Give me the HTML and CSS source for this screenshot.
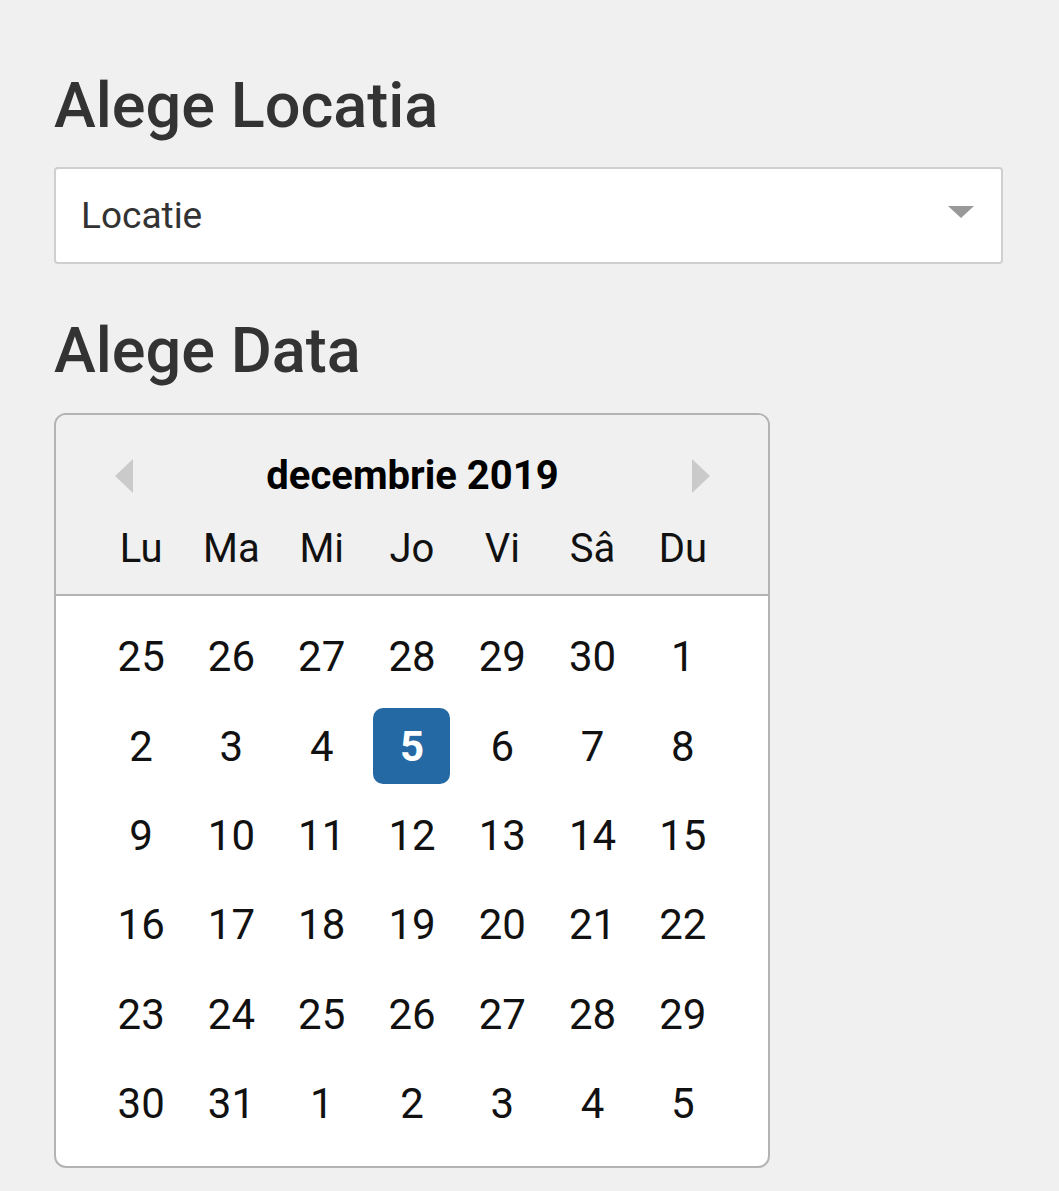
FILE: index.html
```html
<!DOCTYPE html>
<html lang="ro">
<head>
<meta charset="utf-8">
<title>Alege Locatia</title>
<link rel="stylesheet" href="styles.css">
</head>
<body>
<main class="page">
  <h1 class="title title-first">Alege Locatia</h1>
  <div class="select">
    <span class="select-label">Locatie</span>
    <span class="select-caret"></span>
  </div>
  <h1 class="title title-second">Alege Data</h1>
  <section class="calendar">
    <header class="cal-head">
      <div class="cal-nav">
        <span class="arrow arrow-prev"></span>
        <span class="cal-month">decembrie 2019</span>
        <span class="arrow arrow-next"></span>
      </div>
      <div class="cal-grid cal-weekdays">
        <span>Lu</span><span>Ma</span><span>Mi</span><span>Jo</span><span>Vi</span><span>Sâ</span><span>Du</span>
      </div>
    </header>
    <div class="cal-body cal-grid">
      <span class="day">25</span><span class="day">26</span><span class="day">27</span><span class="day">28</span><span class="day">29</span><span class="day">30</span><span class="day">1</span>
      <span class="day">2</span><span class="day">3</span><span class="day">4</span><span class="day"><span class="selected">5</span></span><span class="day">6</span><span class="day">7</span><span class="day">8</span>
      <span class="day">9</span><span class="day">10</span><span class="day">11</span><span class="day">12</span><span class="day">13</span><span class="day">14</span><span class="day">15</span>
      <span class="day">16</span><span class="day">17</span><span class="day">18</span><span class="day">19</span><span class="day">20</span><span class="day">21</span><span class="day">22</span>
      <span class="day">23</span><span class="day">24</span><span class="day">25</span><span class="day">26</span><span class="day">27</span><span class="day">28</span><span class="day">29</span>
      <span class="day">30</span><span class="day">31</span><span class="day">1</span><span class="day">2</span><span class="day">3</span><span class="day">4</span><span class="day">5</span>
    </div>
  </section>
</main>
</body>
</html>
```
FILE: styles.css
```css
html, body {
  margin: 0;
  padding: 0;
  background: #f0f0f0;
}
body {
  font-family: Roboto, "Noto Sans", "Liberation Sans", sans-serif;
  color: #111;
}
.page {
  padding: 69px 56px 24px 54px;
}
.title {
  margin: 0;
  font-size: 63px;
  line-height: 74px;
  font-weight: 500;
  color: #333;
  letter-spacing: 0;
}
.title-first {
  margin-bottom: 24px;
}
.title-second {
  margin-top: 50px;
  margin-bottom: 25px;
}
.select {
  box-sizing: border-box;
  width: 949px;
  height: 97px;
  border: 2px solid #cfcfcf;
  border-radius: 4px;
  background: #fff;
  display: flex;
  align-items: center;
  justify-content: space-between;
  padding: 0 27px 0 25px;
}
.select-label {
  font-size: 37px;
  color: #333;
}
.select-caret {
  width: 0;
  height: 0;
  border-left: 13.5px solid transparent;
  border-right: 13.5px solid transparent;
  border-top: 12px solid #999;
  margin-bottom: 8px;
}
.calendar {
  box-sizing: border-box;
  width: 716px;
  border: 2px solid #b3b3b3;
  border-radius: 12px;
  overflow: hidden;
  background: #fff;
}
.cal-head {
  background: #f0f0f0;
  border-bottom: 2px solid #b3b3b3;
  padding: 31px 0 15px;
}
.cal-nav {
  display: flex;
  align-items: center;
  justify-content: space-between;
  padding: 0 58px 0 59px;
  height: 60px;
}
.cal-month {
  font-size: 40px;
  line-height: 60px;
  font-weight: 700;
  color: #000;
}
.arrow {
  width: 0;
  height: 0;
  border-top: 17.5px solid transparent;
  border-bottom: 17.5px solid transparent;
}
.arrow-prev {
  border-right: 18px solid #cacaca;
}
.arrow-next {
  border-left: 18px solid #cacaca;
}
.cal-grid {
  display: grid;
  grid-template-columns: repeat(7, 1fr);
  padding: 0 40px;
}
.cal-weekdays {
  margin-top: 13px;
  font-size: 40px;
  line-height: 60px;
  text-align: center;
  color: #111;
}
.cal-body {
  padding-top: 16px;
  padding-bottom: 18px;
  grid-auto-rows: 89.4px;
}
.day {
  display: flex;
  align-items: center;
  justify-content: center;
  font-size: 42px;
  color: #111;
}
.selected {
  display: flex;
  align-items: center;
  justify-content: center;
  width: 77px;
  height: 76px;
  border-radius: 10px;
  background: #2469a3;
  color: #fff;
  font-weight: 700;
}
```
